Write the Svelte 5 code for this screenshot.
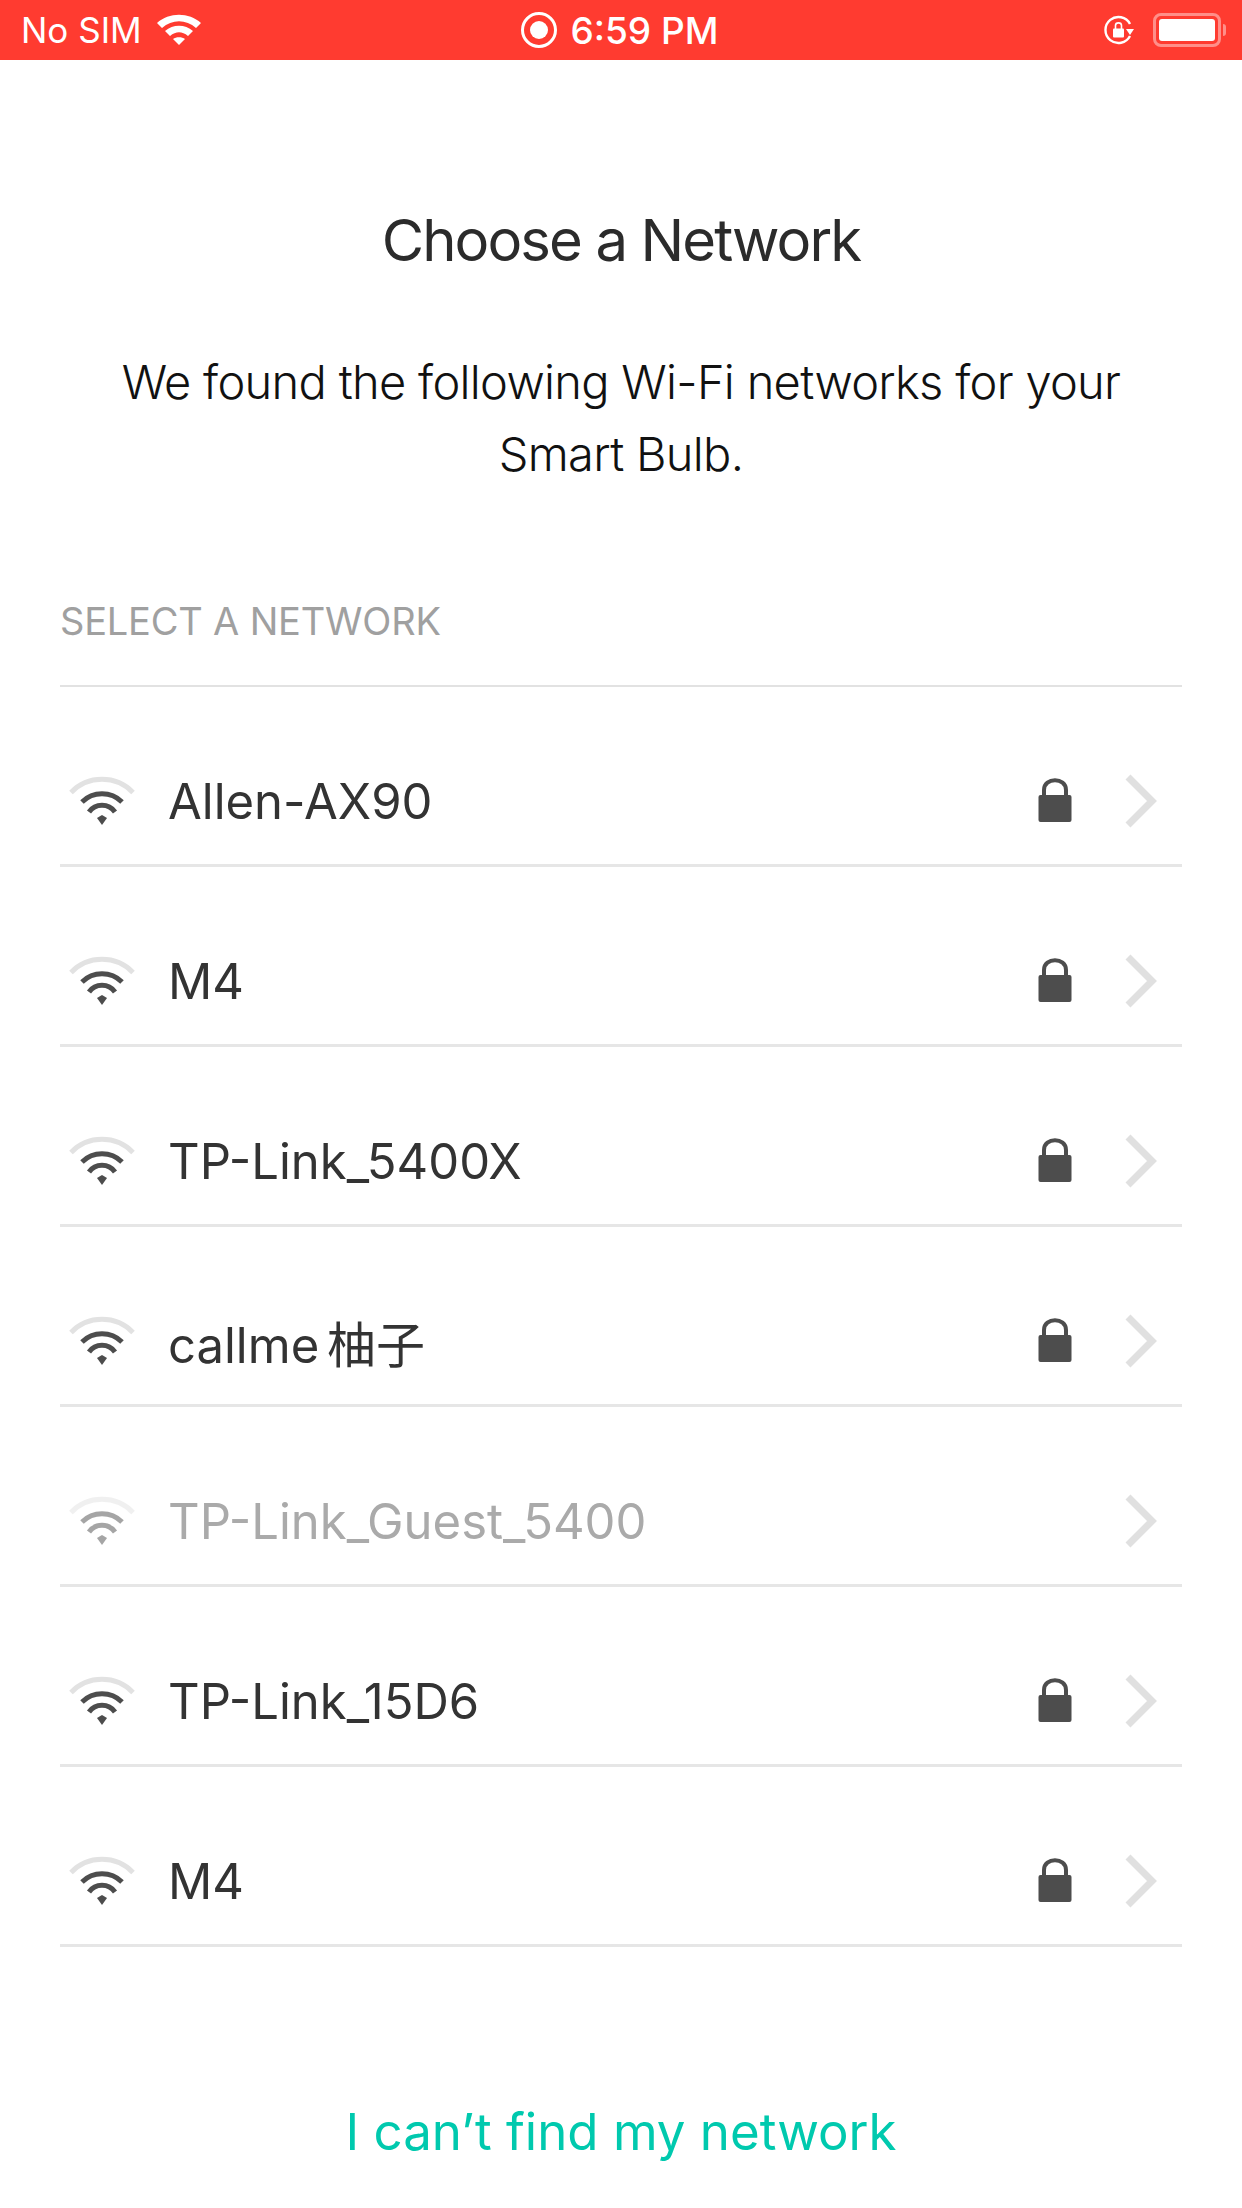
<script>
  const networks = [
    { name: 'Allen-AX90', locked: true },
    { name: 'M4', locked: true },
    { name: 'TP-Link_5400X', locked: true },
    { name: 'callme 柚子', locked: true },
    { name: 'TP-Link_Guest_5400', locked: false },
    { name: 'TP-Link_15D6', locked: true },
    { name: 'M4', locked: true }
  ];
</script>

<div class="page">
  <div class="status-bar">
    <div class="status-side">
      <span>No SIM</span>
      <svg class="status-wifi" width="46" height="34" viewBox="0 0 46 34" fill="none">
        <path d="M1 10C13-1 33-1 45 10L40 15C30 6 16 6 6 15Z" fill="#fff" />
        <path d="M9 18C17 11 29 11 37 18L32 23C26 18 20 18 14 23Z" fill="#fff" />
        <path d="M17 26C20 23.5 26 23.5 29 26L23 32Z" fill="#fff" />
      </svg>
    </div>
    <div class="status-center">
      <svg width="38" height="38" viewBox="0 0 38 38" fill="none">
        <circle cx="19" cy="19" r="16.5" stroke="#fff" stroke-width="3" />
        <circle cx="19" cy="19" r="9" fill="#fff" />
      </svg>
      <span>6:59 PM</span>
    </div>
    <div class="status-side status-right">
      <svg width="32" height="32" viewBox="0 0 32 32" fill="none">
        <path d="M27 10A13 13 0 1 0 27 22" stroke="#fff" stroke-width="2.4" />
        <path d="M23 15H31L27 21Z" fill="#fff" />
        <rect x="10" y="14.5" width="11" height="9" rx="1" fill="#fff" />
        <path d="M12.5 15V11.5C12.500 8 18.500 8 18.500 11.5V15" stroke="#fff" stroke-width="1.600" />
      </svg>
      <div class="battery"><div class="battery-fill"></div></div>
      <div class="battery-cap"></div>
    </div>
  </div>

  <h1>Choose a Network</h1>
  <p class="intro">We found the following Wi-Fi networks for your<br />Smart Bulb.</p>

  <div class="section-label">SELECT A NETWORK</div>

  <ul class="network-list">
    {#each networks as network}
      <li class="network" class:open={!network.locked}>
        <svg class="wifi" width="68" height="56" viewBox="0 0 68 56" fill="none">
          <path class="arc-far" d="M3 19.500A43 43 0 0 1 65 19.500" stroke="#e2e2e2" stroke-width="5" />
          <path d="M14 29A28.500 28.500 0 0 1 54 29" stroke="#4d4d4d" stroke-width="5" />
          <path d="M21 39A16 16 0 0 1 47 39" stroke="#4d4d4d" stroke-width="5" />
          <path d="M29 45L34 42L39 45L34 52Z" fill="#4d4d4d" />
        </svg>
        <span class="name">{network.name}</span>
        {#if network.locked}
          <svg class="lock" width="34" height="46" viewBox="0 0 34 46" fill="none">
            <path d="M6 20V13C6 0 28 0 28 13V20" stroke="#4d4d4d" stroke-width="4" />
            <rect x="0.500" y="18" width="33" height="27" rx="2" fill="#4d4d4d" />
          </svg>
        {/if}
        <svg class="chevron" width="34" height="56" viewBox="0 0 34 56" fill="none">
          <path d="M4 4L28 28L4 52" stroke="#e0e0e0" stroke-width="7" />
        </svg>
      </li>
    {/each}
  </ul>

  <div class="cant-find">I can’t find my network</div>
</div>

<style>
  :global(body) {
    background: #fff;
  }

  .page {
    width: 1242px;
    height: 2208px;
    overflow: hidden;
    display: flex;
    flex-direction: column;
    font-family: Inter, 'Noto Sans CJK SC', sans-serif;
    color: #333;
  }

  .status-bar {
    height: 60px;
    background: #ff3b30;
    color: #fff;
    display: grid;
    grid-template-columns: 1fr auto 1fr;
    align-items: center;
    padding: 0 16px 0 21px;
    box-sizing: border-box;
    font-size: 35px;
  }

  .status-side {
    display: flex;
    align-items: center;
    gap: 14px;
  }

  .status-right {
    justify-content: flex-end;
    gap: 0;
  }

  .status-center {
    display: flex;
    align-items: center;
    gap: 12px;
    margin-right: 8px;
    font-size: 37px;
    font-weight: 500;
  }

  .battery {
    width: 68px;
    height: 34px;
    margin-left: 18px;
    box-sizing: border-box;
    border: 3px solid #ff8f89;
    border-radius: 8px;
    padding: 3px;
  }

  .battery-fill {
    height: 100%;
    background: #fff;
    border-radius: 3px;
  }

  .battery-cap {
    width: 3px;
    height: 12px;
    margin-left: 2px;
    background: #ff8f89;
    border-radius: 0 3px 3px 0;
  }

  h1 {
    margin: 142px 0 0;
    font-size: 58px;
    font-weight: 400;
    line-height: 76px;
    letter-spacing: -1.9px;
    text-align: center;
    color: #2b2b2b;
  }

  .intro {
    margin: 68px 0 0;
    font-size: 47px;
    font-weight: 300;
    line-height: 72px;
    letter-spacing: -0.7px;
    text-align: center;
    color: #111;
  }

  .section-label {
    margin: 106px 60px 0;
    font-size: 38px;
    font-weight: 400;
    line-height: 50px;
    letter-spacing: -0.2px;
    color: #a0a0a0;
    padding-bottom: 39px;
    border-bottom: 2px solid #e2e2e2;
  }

  .network-list {
    list-style: none;
    margin: 0 60px;
    padding: 0;
  }

  .network {
    height: 180px;
    box-sizing: border-box;
    border-bottom: 3px solid #e6e6e6;
    display: flex;
    align-items: center;
    padding: 50px 24px 0 8px;
  }

  .name {
    margin-left: 32px;
    font-size: 49px;
    word-spacing: -6px;
    flex: 1;
    padding-top: 2px;
  }

  .lock {
    margin-top: -2px;
    margin-right: 52px;
  }

  .open .name {
    color: #aaa;
  }

  .open .wifi {
    opacity: 0.5;
  }

  .cant-find {
    margin-top: 152px;
    text-align: center;
    font-size: 51px;
    line-height: 66px;
    color: #00c9ae;
  }
</style>
